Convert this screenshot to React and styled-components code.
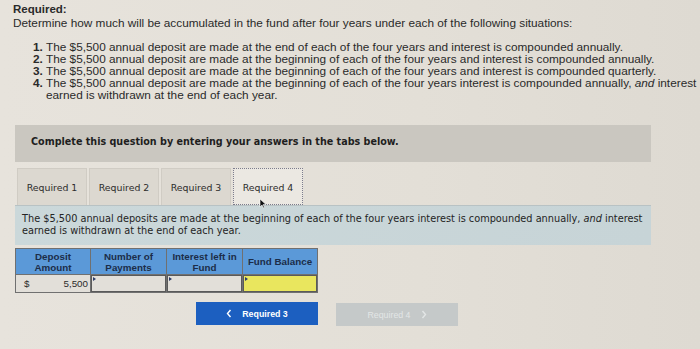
import React from 'react'
import styled, { createGlobalStyle } from 'styled-components'

const Global = createGlobalStyle`
  html, body {
    margin: 0;
    padding: 0;
    width: 700px;
    height: 349px;
    overflow: hidden;
    background: linear-gradient(90deg, #e7e3dc 0%, #e3dfd7 60%, #dedad2 100%);
  }
`

const Page = styled.div`
  width: 700px;
  height: 349px;
  padding: 2px 0 0 13px;
  box-sizing: border-box;
  font-family: 'Liberation Sans', Arial, sans-serif;
  color: #2a2a2a;
`

const Heading = styled.div`
  font-size: 11.5px;
  font-weight: bold;
  line-height: 14px;
`

const Intro = styled.div`
  font-size: 11.8px;
  line-height: 14px;
  white-space: nowrap;
`

const List = styled.ol`
  margin: 11px 0 0 0;
  padding: 0 0 0 33px;
  width: 652px;
  font-size: 11.8px;
  line-height: 12px;

  li::marker {
    font-weight: bold;
  }
`

const Work = styled.div`
  margin-top: 24px;
  width: 636px;
  margin-left: 2px;
  font-family: 'DejaVu Sans', Verdana, sans-serif;
`

const Banner = styled.div`
  background: #cac7c0;
  height: 37px;
  display: flex;
  align-items: center;
  padding: 0 0 4px 16px;
  box-sizing: border-box;
  font-size: 9.6px;
  font-weight: bold;
  color: #1e1e1e;
`

const Tabs = styled.div`
  display: flex;
  gap: 2px;
  margin-top: 6px;
  padding-left: 2px;
  align-items: flex-end;
`

const Tab = styled.div`
  width: 70px;
  height: 37px;
  display: flex;
  align-items: center;
  justify-content: center;
  font-size: 9.4px;
  color: #2c2c2c;
  box-sizing: border-box;
  background: ${p => (p.$active ? '#ebe8e2' : '#dcd8d0')};
  border: ${p => (p.$active ? '1.5px dotted #7c7c8c' : '1px solid #d0ccc4')};
  border-bottom: ${p => (p.$active ? '1.5px dotted #7c7c8c' : 'none')};
  padding-top: ${p => (p.$active ? '2px' : '0')};
  position: relative;
`

const Cursor = styled.svg`
  position: absolute;
  left: 25px;
  top: 29px;
`

const Panel = styled.div`
  background: linear-gradient(90deg, #cbd8da 0%, #c7d4d7 100%);
  border-top: 1px solid #b8c2c4;
  padding: 7px 0 8px 7px;
  font-size: 9.75px;
  line-height: 12px;
  color: #242424;
`

const Table = styled.div`
  display: grid;
  grid-template-columns: 74px 75px 75px 74px;
  width: 301px;
  margin-top: 3px;
  background: #707070;
  border: 1px solid #707070;
  gap: 1px;
  font-family: 'Liberation Sans', Arial, sans-serif;
`

const Head = styled.div`
  background: #5b99d8;
  height: 25px;
  display: flex;
  align-items: center;
  justify-content: center;
  text-align: center;
  font-size: 9.8px;
  font-weight: bold;
  line-height: 11px;
  color: #1c2d48;
`

const Cell = styled.div`
  height: 17px;
  background: ${p => (p.$yellow ? '#e9e65e' : '#e2dfd9')};
  border: ${p => (p.$input ? '1px solid #5a5a5a' : 'none')};
  box-sizing: border-box;
  font-size: 9.8px;
  display: flex;
  align-items: center;
  justify-content: space-between;
  padding: 0 2px 0 8px;
  color: #2a2a2a;
  position: relative;
`

const Marker = styled.span`
  position: absolute;
  left: 1px;
  top: 1px;
  width: 0;
  height: 0;
  border-top: 2px solid transparent;
  border-bottom: 2px solid transparent;
  border-left: 3px solid #2d3d6a;
`

const Nav = styled.div`
  display: flex;
  gap: 18px;
  margin-top: 9px;
  margin-left: 181px;
`

const NavButton = styled.div`
  width: 122px;
  height: 23px;
  display: flex;
  align-items: center;
  justify-content: center;
  gap: 10px;
  font-family: 'Liberation Sans', Arial, sans-serif;
  font-size: 8.8px;
  background: ${p => (p.$disabled ? '#c5c9c9' : '#1c5fc0')};
  color: ${p => (p.$disabled ? '#e3e6e6' : '#ffffff')};
  margin-top: ${p => (p.$disabled ? '1px' : '0')};
  font-weight: ${p => (p.$disabled ? 'normal' : 'bold')};
`

const Chevron = ({ dir }) => (
  <svg width="6" height="9" viewBox="0 0 6 9">
    <path
      d={dir === 'left' ? 'M4.5 1 L1.5 4.5 L4.5 8' : 'M1.5 1 L4.5 4.5 L1.5 8'}
      fill="none"
      stroke="currentColor"
      strokeWidth="1.4"
    />
  </svg>
)

export default function App() {
  return (
    <>
      <Global />
      <Page>
        <Heading>Required:</Heading>
        <Intro>
          Determine how much will be accumulated in the fund after four years under each of the
          following situations:
        </Intro>
        <List>
          <li>The $5,500 annual deposit are made at the end of each of the four years and interest is compounded annually.</li>
          <li>The $5,500 annual deposit are made at the beginning of each of the four years and interest is compounded annually.</li>
          <li>The $5,500 annual deposit are made at the beginning of each of the four years and interest is compounded quarterly.</li>
          <li>
            The $5,500 annual deposit are made at the beginning of each of the four years interest is compounded annually,{' '}
            <i>and</i> interest earned is withdrawn at the end of each year.
          </li>
        </List>

        <Work>
          <Banner>Complete this question by entering your answers in the tabs below.</Banner>
          <Tabs>
            <Tab>Required 1</Tab>
            <Tab>Required 2</Tab>
            <Tab>Required 3</Tab>
            <Tab $active>
              Required 4
              <Cursor width="8" height="11" viewBox="0 0 8 11">
                <path d="M1 1 L1 9 L3 7 L4.5 10 L5.5 9.5 L4.2 6.6 L7 6.6 Z" fill="#111" stroke="#fff" strokeWidth="0.6" />
              </Cursor>
            </Tab>
          </Tabs>
          <Panel>
            The $5,500 annual deposits are made at the beginning of each of the four years interest is compounded
            annually, <i>and</i> interest earned is withdrawn at the end of each year.
          </Panel>
          <Table>
            <Head>Deposit<br />Amount</Head>
            <Head>Number of<br />Payments</Head>
            <Head>Interest left in<br />Fund</Head>
            <Head>Fund Balance</Head>
            <Cell>
              <span>$</span>
              <span>5,500</span>
            </Cell>
            <Cell $input><Marker /></Cell>
            <Cell $input><Marker /></Cell>
            <Cell $input $yellow><Marker /></Cell>
          </Table>
          <Nav>
            <NavButton>
              <Chevron dir="left" />
              Required 3
            </NavButton>
            <NavButton $disabled>
              Required 4
              <Chevron dir="right" />
            </NavButton>
          </Nav>
        </Work>
      </Page>
    </>
  )
}
